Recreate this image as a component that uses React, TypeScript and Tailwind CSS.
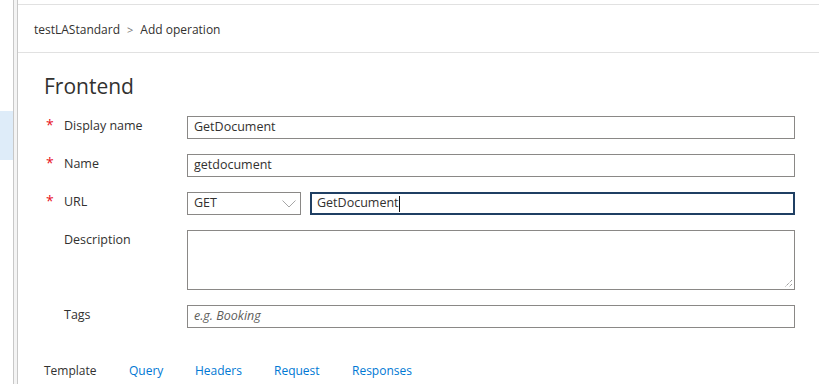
import React from 'react';

const font = { fontFamily: '"Open Sans", "Noto Sans", sans-serif' };

function Label({ required, children }: { required?: boolean; children: React.ReactNode }) {
  return (
    <div className="flex w-[143px] shrink-0 items-start pt-[1px]">
      <span className="w-[20px] pl-[2px] text-[14px] leading-[16px] text-[#e81123]">{required ? '*' : ''}</span>
      <span className="text-[12.5px] leading-[18px] text-[#323130]">{children}</span>
    </div>
  );
}

function TextBox({ value, placeholder }: { value?: string; placeholder?: string }) {
  return (
    <div className="flex h-[23px] flex-1 items-center border border-[#8a8886] px-[6px] text-[12.5px]">
      {value ? (
        <span className="text-[#323130]">{value}</span>
      ) : (
        <span className="italic text-[#605e5c]">{placeholder}</span>
      )}
    </div>
  );
}

export default function App() {
  return (
    <div className="flex h-[384px] w-[819px] overflow-hidden bg-white" style={font}>
      {/* left rail */}
      <div className="flex w-[13px] shrink-0 flex-col">
        <div className="h-[111px]" />
        <div className="h-[49px] bg-[#deecf9]" />
      </div>
      <div className="w-[5px] shrink-0 border-x border-[#c8c8c8] bg-[#f4f4f4]" />

      {/* main */}
      <div className="flex flex-1 flex-col pt-[4px]">
        <div className="flex h-[49px] items-center border-y border-[#e1e1e1] px-[16px] pt-[3px] text-[12px] text-[#323130]">
          <span>testLAStandard</span>
          <span className="mx-[7px] text-[11px] text-[#767676]">&gt;</span>
          <span>Add operation</span>
        </div>

        <div className="flex flex-col pl-[26px] pr-[24px]">
          <h1 className="mt-[18px] h-[30px] text-[21px] leading-[30px] text-[#323130]">Frontend</h1>

          <div className="mt-[15px] flex flex-col gap-[15px]">
            <div className="flex items-start">
              <Label required>Display name</Label>
              <TextBox value="GetDocument" />
            </div>
            <div className="flex items-start">
              <Label required>Name</Label>
              <TextBox value="getdocument" />
            </div>
            <div className="flex items-start">
              <Label required>URL</Label>
              <div className="flex h-[23px] w-[114px] items-center justify-between border border-[#8a8886] pl-[6px] pr-[4px] text-[12.5px] text-[#323130]">
                <span>GET</span>
                <svg width="14" height="8" viewBox="0 0 14 8" fill="none">
                  <path d="M0.5 0.5 L7 7 L13.5 0.5" stroke="#a6a6a6" strokeWidth="1" />
                </svg>
              </div>
              <div className="ml-[9px] flex h-[23px] flex-1 items-center border-2 border-[#1f3f63] px-[5px] text-[12.5px] text-[#323130]">
                <span>GetDocument</span>
                <span className="h-[16px] w-px bg-[#111]" />
              </div>
            </div>
            <div className="flex items-start">
              <Label>Description</Label>
              <div className="relative h-[60px] flex-1 border border-[#8a8886]">
                <svg className="absolute bottom-[1px] right-[1px]" width="9" height="9" viewBox="0 0 9 9">
                  <path d="M8 1 L1 8 M8 5 L5 8" stroke="#777" strokeWidth="1" strokeDasharray="1 1" />
                </svg>
              </div>
            </div>
            <div className="flex items-start">
              <Label>Tags</Label>
              <TextBox placeholder="e.g. Booking" />
            </div>
          </div>

          <div className="mt-[34px] flex text-[12px]">
            <span className="w-[85px] text-[#323130]">Template</span>
            <span className="w-[66px] text-[#0078d4]">Query</span>
            <span className="w-[79px] text-[#0078d4]">Headers</span>
            <span className="w-[78px] text-[#0078d4]">Request</span>
            <span className="text-[#0078d4]">Responses</span>
          </div>
        </div>
      </div>
    </div>
  );
}
